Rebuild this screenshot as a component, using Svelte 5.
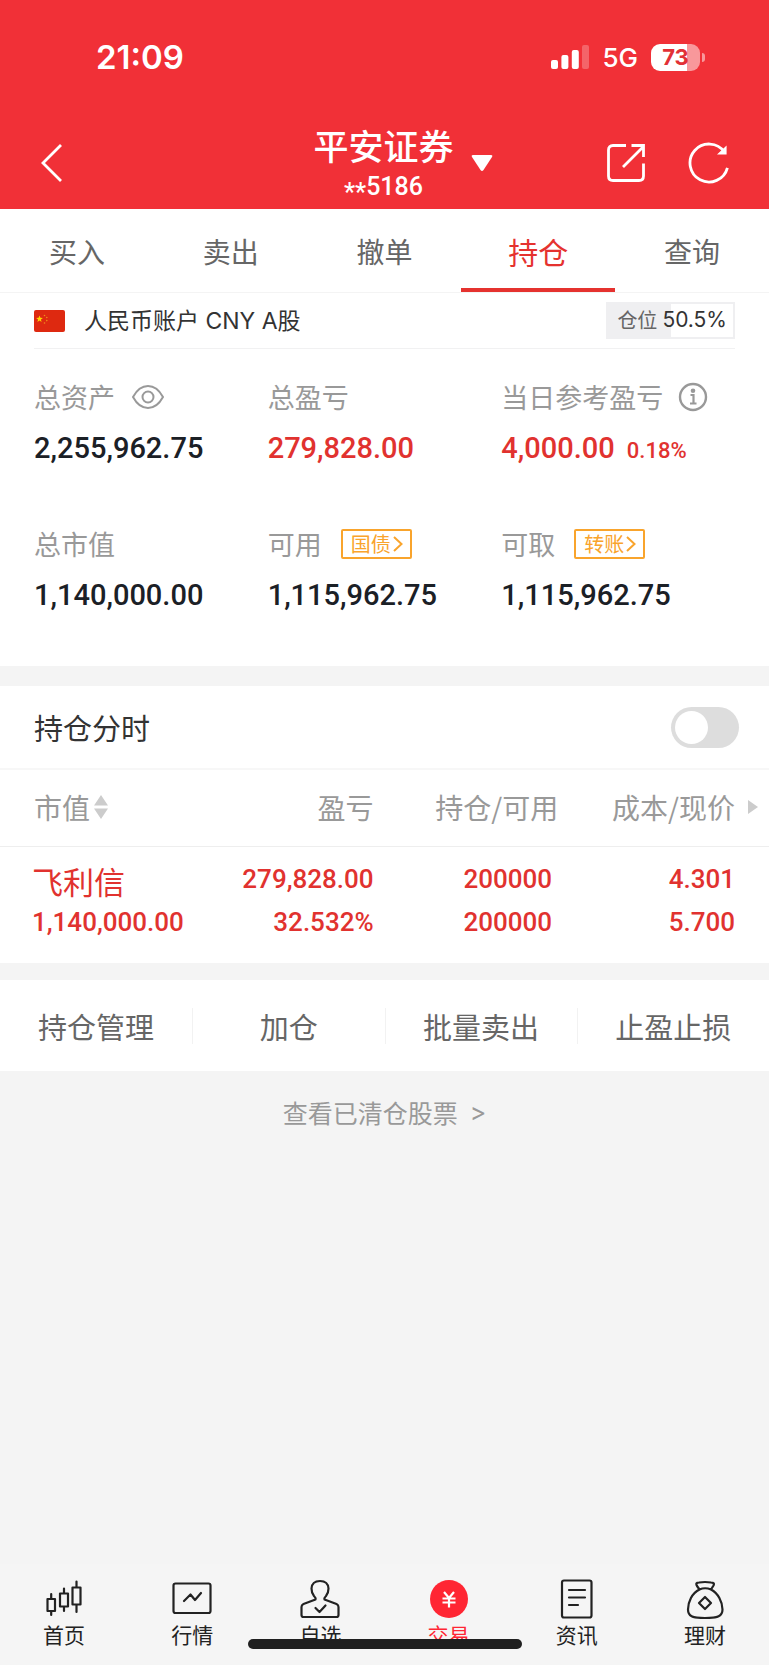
<script>
  const tabs = ['买入', '卖出', '撤单', '持仓', '查询'];
  let activeTab = $state('持仓');
  let intraday = $state(false);
  const position = 50.5;

  const assets = [
    { label: '总资产', value: '2,255,962.75', icon: 'eye' },
    { label: '总盈亏', value: '279,828.00', up: true },
    { label: '当日参考盈亏', value: '4,000.00', rate: '0.18%', icon: 'info', up: true },
    { label: '总市值', value: '1,140,000.00' },
    { label: '可用', value: '1,115,962.75', action: '国债' },
    { label: '可取', value: '1,115,962.75', action: '转账' }
  ];

  const holdings = [
    {
      name: '飞利信',
      market: '1,140,000.00',
      profit: '279,828.00',
      rate: '32.532%',
      held: '200000',
      usable: '200000',
      cost: '4.301',
      price: '5.700'
    }
  ];

  const actions = ['持仓管理', '加仓', '批量卖出', '止盈止损'];
  const nav = ['首页', '行情', '自选', '交易', '资讯', '理财'];
</script>

<div class="page">
  <header>
    <div class="status">
      <span class="time">21:09</span>
      <div class="signals">
        <svg width="38" height="24" viewBox="0 0 38 24" fill="#fff" aria-hidden="true">
          <rect x="0" y="15" width="7" height="9" rx="2" />
          <rect x="10.400" y="10" width="7" height="14" rx="2" />
          <rect x="20.800" y="5" width="7" height="19" rx="2" />
          <rect x="31" y="0" width="7" height="24" rx="2" opacity=".25" />
        </svg>
        <span class="network">5G</span>
        <div class="battery"><span>73</span></div>
      </div>
    </div>
    <div class="titlebar">
      <button class="icon back" aria-label="返回">
        <svg width="24" height="40" viewBox="0 0 24 40" fill="none" stroke="#fff" stroke-width="2.800">
          <path d="M22 2 4 20 22 38" />
        </svg>
      </button>
      <button class="account">
        <span class="names">
          <strong>平安证券</strong>
          <span class="number"><span class="mask">**</span>5186</span>
        </span>
        <svg width="22" height="18" viewBox="0 0 22 18" aria-hidden="true">
          <path d="M2 1h18q2 0 1 2L12.500 16q-1.500 2-3 0L1 3Q0 1 2 1z" fill="#fff" />
        </svg>
      </button>
      <div class="tools">
        <button class="icon" aria-label="分享">
          <svg width="40" height="40" viewBox="0 0 40 40" fill="none" stroke="#fff" stroke-width="2.800">
            <path d="M20 2.500H7Q2.500 2.500 2.500 7V33Q2.500 37.500 7 37.500H33Q37.500 37.500 37.500 33V20.500M17 24 37 4M25.500 2.500H37.500V14" />
          </svg>
        </button>
        <button class="icon" aria-label="刷新">
          <svg width="42" height="42" viewBox="0 0 42 42" fill="none" stroke="#fff" stroke-width="2.800">
            <path d="M39.400 25.800A19 19 0 1 1 36.500 10" />
            <path d="M38 5V12H30.500z" fill="#fff" stroke-width="1.200" />
          </svg>
        </button>
      </div>
    </div>
  </header>

  <nav class="tabs" aria-label="交易">
    {#each tabs as tab}
      <button class:active={tab === activeTab} onclick={() => (activeTab = tab)}>{tab}</button>
    {/each}
  </nav>

  <main>
    <section class="summary">
      <div class="currency">
        <svg class="flag" width="31" height="22" viewBox="0 0 31 22" aria-hidden="true">
          <rect width="31" height="22" rx="2" fill="#de2910" />
          <path d="m5.500 5.500.9 2.300 2.500.1-2 1.600.7 2.400-2.100-1.400-2.100 1.400.7-2.400-2-1.600 2.500-.1z" fill="#ffd400" />
          <g fill="#f08a1c">
            <circle cx="10.500" cy="5.500" r=".8" /><circle cx="12.800" cy="7.500" r=".8" />
            <circle cx="12.800" cy="10.600" r=".8" /><circle cx="10.500" cy="13" r=".8" />
          </g>
        </svg>
        <span class="currency-name">人民币账户 CNY A股</span>
        <div class="position">
          <i style="width: {position}%"></i>
          <span class="position-label">仓位</span><span class="position-value">{position}%</span>
        </div>
      </div>

      <dl class="assets">
        {#each assets as item}
          <div>
            <dt>
              {item.label}
              {#if item.icon === 'eye'}
                <svg class="eye" width="32" height="24" viewBox="0 0 32 24" fill="none" stroke="#999" stroke-width="2">
                  <path d="M1 12Q7 1 16 1T31 12Q25 23 16 23T1 12z" /><circle cx="16" cy="12" r="5.500" />
                </svg>
              {:else if item.icon === 'info'}
                <svg class="info" width="30" height="30" viewBox="0 0 30 30" fill="none" stroke="#999" stroke-width="2.400">
                  <circle cx="15" cy="15" r="13" /><path d="M12.500 13h3V21M12 21.500h6.500" stroke-width="2.200" />
                  <circle cx="15" cy="8.800" r="2.300" fill="#999" stroke="none" />
                </svg>
              {/if}
              {#if item.action}
                <button class="chip">
                  {item.action}<svg width="10" height="16" viewBox="0 0 10 16" fill="none" stroke="#f9a42c" stroke-width="2">
                    <path d="m1 1 7.500 7L1 15" />
                  </svg>
                </button>
              {/if}
            </dt>
            <dd class:up={item.up}>{item.value}{#if item.rate}<small>{item.rate}</small>{/if}</dd>
          </div>
        {/each}
      </dl>
    </section>

    <section class="positions">
      <label class="switch-row">
        <span>持仓分时</span>
        <input type="checkbox" role="switch" bind:checked={intraday} />
      </label>

      <table>
        <thead>
          <tr>
            <th>
              <button class="sort">
                市值<svg width="14" height="24" viewBox="0 0 14 24" fill="#ccc" aria-hidden="true">
                  <path d="M7 0 14 10.500H0zM0 13.500H14L7 24z" />
                </svg>
              </button>
            </th>
            <th>盈亏</th>
            <th>持仓/可用</th>
            <th>成本/现价</th>
            <th class="more" aria-label="更多">
              <svg width="10" height="14" viewBox="0 0 10 14"><path d="M0 0 10 7 0 14z" fill="#ccc" /></svg>
            </th>
          </tr>
        </thead>
        <tbody>
          {#each holdings as row}
            <tr>
              <td><span class="stock">{row.name}</span><span>{row.market}</span></td>
              <td><span>{row.profit}</span><span>{row.rate}</span></td>
              <td><span>{row.held}</span><span>{row.usable}</span></td>
              <td><span>{row.cost}</span><span>{row.price}</span></td>
              <td></td>
            </tr>
          {/each}
        </tbody>
      </table>
    </section>

    <div class="actions">
      {#each actions as action}
        <button>{action}</button>
      {/each}
    </div>

    <a class="cleared" href="#cleared">查看已清仓股票 <span>&gt;</span></a>
  </main>

  <nav class="bottom" aria-label="主导航">
    {#each nav as item, i}
      <a href="#{item}" class:current={item === '交易'}>
        <svg width="40" height="40" viewBox="0 0 40 40" fill="none" stroke="#222" stroke-width="2.200" stroke-linejoin="round" stroke-linecap="round" aria-hidden="true">
          {#if i === 0}
            <path d="M3.500 20h7.500v12H3.500zM7.200 15v5M7.200 32v4M16 14.500h8v13h-8zM20 9.500v5M20 27.500v4.500M28.500 8.500h8v17h-8zM32.500 2.500v6M32.500 25.500V33" />
          {:else if i === 1}
            <rect x="1.500" y="4.500" width="37" height="29.500" rx="2" />
            <path d="m12 22 6.500-6.500 4.500 5.500 6-7" />
          {:else if i === 2}
            <path d="M15.500 20.500 3.500 25Q1.500 26 1.500 28V36Q1.500 38 3.500 38H36.500Q38.500 38 38.500 36V28Q38.500 26 36.500 25L24.500 20.500Q24 19 26 17 28.500 14 28.500 9.500 28 2 20 2T11.500 9.500Q11.500 14 14 17 16 19 15.500 20.500zM15.500 29l4 4 6-6.500" />
          {:else if i === 3}
            <circle cx="20" cy="20" r="19" fill="#ff2633" stroke="none" />
            <path d="m15 13 5 6 5-6M20 19v9.500M13.500 19.500H26.500M13.500 23.500H26.500" stroke="#fff" stroke-linecap="butt" />
          {:else if i === 4}
            <rect x="5" y="1.500" width="29.500" height="37" rx="2" />
            <path d="M12 11H28M12 18.500H28M12 26H21" />
          {:else}
            <path d="M14.500 10.500 12 7Q10 3.500 14 3.500 20 2.500 26 3.500 30 3.500 28.500 6.500L26 10.500M14.500 10.500Q20 8 26 10.500C33 14 37.500 23 37.500 30.500 37.500 37 33 39 20 39S3 37 3 30.500C3 23 7 14 14.500 10.500z" />
            <path d="m20 18 6 6-6 6-6-6z" />
          {/if}
        </svg>
        <span>{item}</span>
      </a>
    {/each}
    <div class="home-indicator"></div>
  </nav>
</div>

<style>
  :global(body) {
    margin: 0;
    background: #f4f4f4;
  }
  .page {
    display: flex;
    flex-direction: column;
    min-height: 100vh;
    font-family: 'Noto Sans CJK SC', sans-serif;
    color: #333;
  }
  button {
    padding: 0;
    border: 0;
    background: none;
    font: inherit;
    color: inherit;
    cursor: pointer;
  }
  a {
    color: inherit;
    text-decoration: none;
  }
  svg {
    flex: none;
    display: block;
  }

  header {
    background: #f13037;
    color: #fff;
  }
  .status {
    display: flex;
    justify-content: space-between;
    align-items: center;
    height: 114px;
    padding: 0 69px 2px 96px;
    font-family: Inter, sans-serif;
  }
  .time {
    font-size: 33px;
    font-weight: 600;
  }
  .signals {
    display: flex;
    align-items: center;
    gap: 13px;
  }
  .network {
    font-size: 26px;
    font-weight: 500;
  }
  .battery {
    position: relative;
    width: 49px;
    height: 27px;
    border-radius: 9px;
    background: linear-gradient(90deg, #fff 73%, #f8989b 73%);
    color: #e23036;
    font-size: 22px;
    font-weight: 700;
    line-height: 27px;
    text-align: center;
  }
  .battery::after {
    content: '';
    position: absolute;
    left: 51px;
    top: 9px;
    width: 3px;
    height: 9px;
    border-radius: 0 4px 4px 0;
    background: #f8989b;
  }
  .titlebar {
    display: grid;
    grid-template-columns: 1fr auto 1fr;
    align-items: center;
    height: 93px;
    padding: 0 39px;
  }
  .icon {
    display: flex;
  }
  .account {
    display: flex;
    align-items: center;
    gap: 17px;
    padding-left: 37px;
  }
  .names {
    display: flex;
    flex-direction: column;
    align-items: center;
    gap: 4px;
    padding-top: 4px;
  }
  .names strong {
    font-size: 35px;
    font-weight: 500;
    line-height: 42px;
  }
  .number {
    font-family: Roboto, sans-serif;
    font-size: 25px;
    font-weight: 500;
    line-height: 34px;
  }
  .mask {
    vertical-align: sub;
    line-height: 1;
  }
  .tools {
    display: flex;
    justify-content: flex-end;
    align-items: center;
    gap: 42px;
  }

  .tabs {
    display: grid;
    grid-template-columns: repeat(5, 1fr);
    height: 83px;
    background: #fff;
    border-bottom: 1px solid #f4f4f4;
    color: #666;
    font-size: 28px;
  }
  .tabs button {
    border-top: 4px solid transparent;
    border-bottom: 4px solid transparent;
  }
  .tabs .active {
    border-bottom-color: #e5322f;
    color: #e5322f;
    font-size: 30px;
  }

  main {
    flex: 1;
  }
  .summary {
    background: #fff;
    padding: 0 34px;
  }
  .currency {
    display: flex;
    align-items: center;
    height: 55px;
    border-bottom: 1px solid #f1f1f2;
  }
  .currency-name {
    margin-left: 19px;
    padding-bottom: 3px;
    font-family: Inter, 'Noto Sans CJK SC', sans-serif;
    font-size: 23px;
  }
  .position {
    position: relative;
    display: flex;
    align-items: center;
    gap: 5px;
    height: 33px;
    margin-left: auto;
    padding: 0 6px 0 9px;
    border: 2px solid #efeff1;
    font-size: 20px;
    line-height: 30px;
  }
  .position i {
    position: absolute;
    left: 0;
    top: 0;
    bottom: 0;
    background: #efeff1;
  }
  .position span {
    position: relative;
    padding-bottom: 2px;
  }
  .position-label {
    color: #666;
  }
  .position-value {
    font-family: Inter, sans-serif;
    font-size: 21px;
  }

  .assets {
    display: grid;
    grid-template-columns: repeat(3, 1fr);
    row-gap: 56px;
    margin: 0;
    padding: 28px 0 51px;
  }
  dt {
    display: flex;
    align-items: center;
    height: 40px;
    margin-bottom: 11px;
    color: #999;
    font-size: 27px;
    line-height: 40px;
    white-space: nowrap;
  }
  .eye {
    margin-left: 17px;
  }
  .info {
    margin-left: 15px;
  }
  .chip {
    display: flex;
    align-items: center;
    gap: 2px;
    box-sizing: border-box;
    height: 30px;
    margin-left: 19px;
    padding: 0 7px 0 8px;
    border: 2px solid #f9a42c;
    border-radius: 2px;
    color: #f9a42c;
    font-size: 20px;
    line-height: 26px;
  }
  dd {
    height: 40px;
    margin: 0;
    color: #1b2026;
    font-family: Roboto, sans-serif;
    font-size: 29px;
    font-weight: 500;
    line-height: 40px;
    white-space: nowrap;
  }
  dd.up {
    color: #e1322f;
  }
  dd small {
    margin-left: 12px;
    font-size: 22px;
  }

  .positions {
    margin-top: 20px;
    background: #fff;
  }
  .switch-row {
    display: flex;
    align-items: center;
    justify-content: space-between;
    height: 82px;
    padding: 0 30px 0 34px;
    border-bottom: 2px solid #f7f7f7;
    font-size: 29px;
    line-height: 40px;
  }
  input {
    appearance: none;
    display: flex;
    align-items: center;
    width: 68px;
    height: 41px;
    margin: 0;
    padding: 4px;
    box-sizing: border-box;
    border-radius: 21px;
    background: #ddd;
    cursor: pointer;
  }
  input::before {
    content: '';
    width: 33px;
    height: 33px;
    border-radius: 50%;
    background: #fff;
  }
  input:checked {
    justify-content: flex-end;
    background: #e5322f;
  }

  table {
    width: 100%;
    table-layout: fixed;
    border-collapse: collapse;
  }
  th {
    height: 73px;
    padding: 0 0 3px;
    border-bottom: 1px solid #eee;
    color: #999;
    font-size: 28px;
    font-weight: 400;
    text-align: right;
    white-space: nowrap;
  }
  th:nth-child(1) {
    width: 27%;
    padding-left: 34px;
    text-align: left;
  }
  th:nth-child(3) {
    width: 24%;
  }
  th:nth-child(4) {
    width: 23%;
  }
  th.more {
    width: 34px;
  }
  .more svg {
    margin-left: 13px;
  }
  .sort {
    display: flex;
    align-items: center;
    gap: 4px;
  }
  td {
    height: 86px;
    padding: 11px 0 19px;
    color: #e1322f;
    font-family: Roboto, 'Noto Sans CJK SC', sans-serif;
    font-size: 26px;
    font-weight: 500;
    line-height: 43px;
    text-align: right;
  }
  td:first-child {
    padding-left: 32px;
    text-align: left;
  }
  td:nth-child(3) {
    padding-right: 6px;
  }
  td span {
    display: block;
    height: 43px;
  }
  td .stock {
    font-size: 31px;
    font-weight: 400;
    line-height: 52px;
  }

  .actions {
    display: grid;
    grid-template-columns: repeat(4, 1fr);
    align-items: center;
    height: 91px;
    margin-top: 17px;
    background: #fff;
    color: #666;
    font-size: 29px;
  }
  .actions button {
    height: 36px;
    line-height: 34px;
  }
  .actions button + button {
    border-left: 1px solid #f2f2f2;
  }
  .cleared {
    display: flex;
    justify-content: center;
    gap: 12px;
    padding: 22px 0;
    color: #999;
    font-size: 25px;
    line-height: 38px;
  }
  .cleared span {
    font-family: Inter, sans-serif;
  }

  .bottom {
    position: relative;
    display: grid;
    grid-template-columns: repeat(6, 1fr);
    height: 86px;
    padding-top: 15px;
    background: #f5f5f5;
    color: #222;
    font-size: 21px;
  }
  .bottom a {
    display: flex;
    flex-direction: column;
    align-items: center;
    gap: 1px;
    line-height: 28px;
  }
  .bottom .current {
    color: #ff2633;
  }
  .home-indicator {
    position: absolute;
    left: 50%;
    bottom: 16px;
    width: 274px;
    height: 10px;
    border-radius: 5px;
    background: #202020;
    transform: translateX(-50%);
  }
</style>
